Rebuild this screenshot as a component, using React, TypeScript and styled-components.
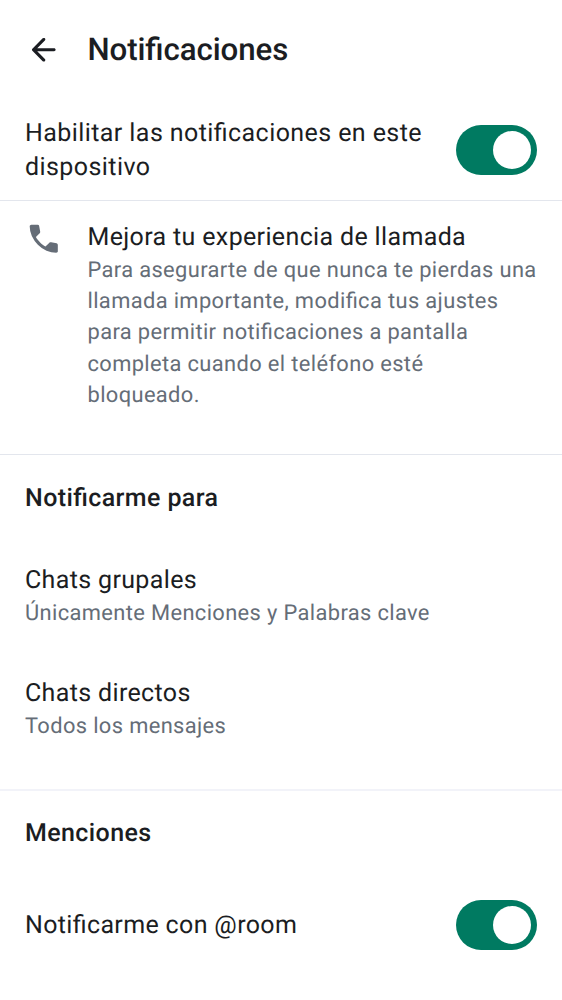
import React from 'react';
import styled, { createGlobalStyle } from 'styled-components';

const Global = createGlobalStyle`
  * { box-sizing: border-box; }
  body {
    margin: 0;
    background: #fff;
    font-family: Roboto, sans-serif;
    font-feature-settings: 'liga' 1;
    text-rendering: geometricPrecision;
    color: #1b1d22;
  }
  h1, h2, p { margin: 0; }
`;
const Screen = styled.main`
  width: 562px;
  height: 1000px;
  overflow: hidden;
  background: #fff;
`;
const AppBar = styled.header`
  height: 100px;
  display: flex;
  align-items: center;
  padding-left: 25px;
  gap: 25px;
`;
const BackButton = styled.button`
  width: 37.5px;
  height: 37.5px;
  padding: 0;
  border: 0;
  background: none;
  color: #1b1d22;
  svg { display: block; }
`;
const Title = styled.h1`
  font-size: 31.25px;
  font-weight: 500;
  line-height: 44px;
  letter-spacing: -0.1px;
`;
const Section = styled.section<{ $height: number; $line?: string; $lineWidth?: number }>`
  height: ${p => p.$height}px;
  border-bottom: ${p => p.$lineWidth ?? 1}px solid ${p => p.$line ?? '#e3e6ed'};
`;
const Row = styled.div<{ $height: number }>`
  height: ${p => p.$height}px;
  display: flex;
  align-items: center;
  justify-content: space-between;
  padding: 0 25px;
`;
const Label = styled.p<{ $spacing?: number }>`
  font-size: 25px;
  line-height: 34.375px;
  letter-spacing: ${p => p.$spacing ?? 0.35}px;
  padding-top: 1px;
  margin-bottom: -1px;
  white-space: pre-line;
`;
const Detail = styled.p`
  font-size: 21.875px;
  line-height: 31.25px;
  letter-spacing: 0.37px;
  padding-top: 0.6px;
  color: #656d77;
  white-space: pre;
`;
const Track = styled.button`
  width: 81px;
  height: 50px;
  flex: none;
  display: flex;
  justify-content: flex-end;
  align-items: center;
  padding: 0 6px 0 0;
  border: 0;
  border-radius: 25px;
  background: #007a61;
`;
const Thumb = styled.span`
  width: 38px;
  height: 38px;
  border-radius: 50%;
  background: #fff;
`;
const Tip = styled.div`
  display: flex;
  gap: 25px;
  padding: 19px 0 0 25px;
  svg { flex: none; display: block; }
`;
const Heading = styled.h2<{ $top?: number }>`
  font-size: 25px;
  font-weight: 500;
  line-height: 34px;
  letter-spacing: 0.4px;
  padding: ${p => p.$top ?? 26}px 25px 0;
`;
const Option = styled.div<{ $gap: number }>`
  padding: ${p => p.$gap}px 25px 0;
`;

const Toggle = ({ label }: { label: string }) => (
  <Track role="switch" aria-checked="true" aria-label={label}><Thumb /></Track>
);

export default function App() {
  return (
    <>
      <Global />
      <Screen>
        <AppBar>
          <BackButton aria-label="Atrás">
            <svg width="37.5" height="37.5" viewBox="0 0 24 24" fill="currentColor">
              <path d="M7.83 13l4.9 4.9c.2.2.29.43.29.7s-.11.5-.31.7c-.2.18-.43.28-.7.29s-.5-.1-.7-.29l-6.6-6.6a.96.96 0 0 1-.28-.7q0-.4.28-.7l6.6-6.6q.27-.27.69-.28c.27 0 .51.09.71.28.2.2.3.44.3.71s-.1.51-.3.71L7.83 11H18.6c.28 0 .52.1.71.29s.29.43.29.71-.1.52-.29.71-.43.29-.71.29z" />
            </svg>
          </BackButton>
          <Title>Notificaciones</Title>
        </AppBar>
        <Section $height={101}>
          <Row $height={100}>
            <Label $spacing={0.42}>{'Habilitar las notificaciones en este\ndispositivo'}</Label>
            <Toggle label="Habilitar las notificaciones" />
          </Row>
        </Section>
        <Section $height={254}>
          <Tip>
            <svg width="37.5" height="37.5" viewBox="0 0 24 24" fill="#656d77">
              <path d="M19.95 21q-3.13 0-6.18-1.36a18.8 18.8 0 0 1-5.54-3.87 18.8 18.8 0 0 1-3.87-5.54Q3 7.18 3 4.05q0-.45.3-.75t.75-.3H8.1q.35 0 .62.24.28.24.33.56l.65 3.5q.05.4-.03.68a1.1 1.1 0 0 1-.27.47L6.98 10.9q.5.93 1.18 1.79.69.86 1.52 1.66.78.77 1.63 1.44t1.79 1.21l2.35-2.35q.23-.23.59-.34t.71-.06l3.45.7q.35.1.58.36.22.26.22.59v4.05q0 .45-.3.75t-.75.3" />
            </svg>
            <div>
              <Label>Mejora tu experiencia de llamada</Label>
              <Detail>{'Para asegurarte de que nunca te pierdas una\nllamada importante, modifica tus ajustes\npara permitir notificaciones a pantalla\ncompleta cuando el teléfono esté\nbloqueado.'}</Detail>
            </div>
          </Tip>
        </Section>
        <Section $height={336} $line="#f2f3f9" $lineWidth={2}>
          <Heading $top={27}>Notificarme para</Heading>
          <Option $gap={47.4}>
            <Label>Chats grupales</Label>
            <Detail>Únicamente Menciones y Palabras clave</Detail>
          </Option>
          <Option $gap={46.4}>
            <Label>Chats directos</Label>
            <Detail>Todos los mensajes</Detail>
          </Option>
        </Section>
        <Heading>Menciones</Heading>
        <Row $height={148}>
          <Label>Notificarme con @room</Label>
          <Toggle label="Notificarme con @room" />
        </Row>
      </Screen>
    </>
  );
}
